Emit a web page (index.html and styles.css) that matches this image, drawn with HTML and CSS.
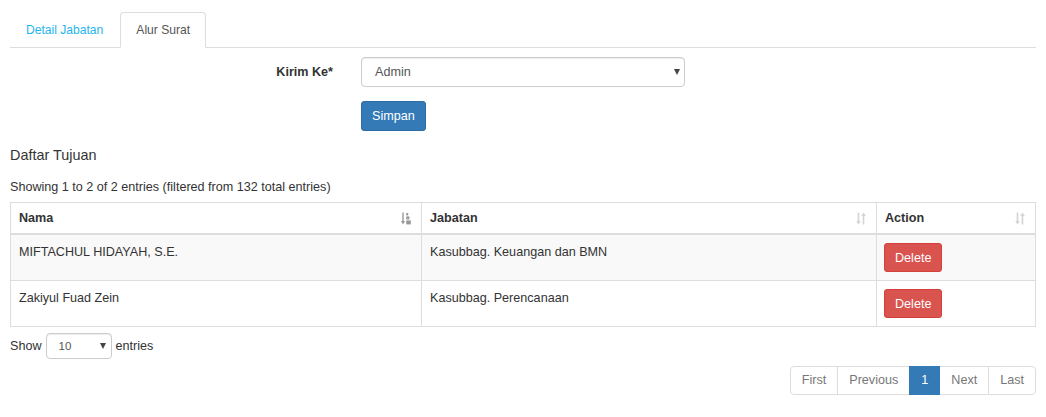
FILE: index.html
```html
<!DOCTYPE html>
<html>
<head>
<meta charset="utf-8">
<link rel="stylesheet" href="styles.css">
</head>
<body>
<div class="page">
  <ul class="tabs">
    <li class="tab"><a href="#">Detail Jabatan</a></li>
    <li class="tab active"><a href="#">Alur Surat</a></li>
  </ul>

  <form class="form">
    <div class="form-row">
      <label class="form-label">Kirim Ke*</label>
      <div class="select-wrap">
        <select class="select"><option>Admin</option></select>
        <span class="caret"></span>
      </div>
    </div>
    <div class="form-row">
      <span class="form-label"></span>
      <div><button type="button" class="btn btn-primary">Simpan</button></div>
    </div>
  </form>

  <h4 class="section-title">Daftar Tujuan</h4>
  <div class="info">Showing 1 to 2 of 2 entries (filtered from 132 total entries)</div>

  <table class="table">
    <thead>
      <tr>
        <th class="col-nama">Nama
          <svg class="sort sorted" width="10" height="13" viewBox="0 0 10 13"><path d="M2 0.5v10" stroke="currentColor" stroke-width="1.4"/><path d="M0 9h4l-2 3.5z" fill="currentColor"/><rect x="5.2" y="1" width="2" height="2.4" fill="currentColor"/><rect x="5.2" y="4.4" width="3.2" height="3" fill="currentColor"/><rect x="5.2" y="8.4" width="4.6" height="4" fill="currentColor"/></svg>
        </th>
        <th class="col-jab">Jabatan
          <svg class="sort" width="10" height="13" viewBox="0 0 10 13"><path d="M2.5 0.5v10" stroke="currentColor" stroke-width="1.6"/><path d="M0.2 9h4.6l-2.3 3.6z" fill="currentColor"/><path d="M7.5 2.5v10" stroke="currentColor" stroke-width="1.6"/><path d="M5.2 4h4.6l-2.3-3.6z" fill="currentColor"/></svg>
        </th>
        <th class="col-act">Action
          <svg class="sort" width="10" height="13" viewBox="0 0 10 13"><path d="M2.5 0.5v10" stroke="currentColor" stroke-width="1.6"/><path d="M0.2 9h4.6l-2.3 3.6z" fill="currentColor"/><path d="M7.5 2.5v10" stroke="currentColor" stroke-width="1.6"/><path d="M5.2 4h4.6l-2.3-3.6z" fill="currentColor"/></svg>
        </th>
      </tr>
    </thead>
    <tbody>
      <tr class="odd">
        <td>MIFTACHUL HIDAYAH, S.E.</td>
        <td>Kasubbag. Keuangan dan BMN</td>
        <td><button type="button" class="btn btn-danger">Delete</button></td>
      </tr>
      <tr>
        <td>Zakiyul Fuad Zein</td>
        <td>Kasubbag. Perencanaan</td>
        <td><button type="button" class="btn btn-danger">Delete</button></td>
      </tr>
    </tbody>
  </table>

  <div class="length">
    <span>Show</span>
    <div class="select-wrap small">
      <select class="select select-sm"><option>10</option></select>
      <span class="caret"></span>
    </div>
    <span>entries</span>
  </div>

  <div class="pager-row">
    <ul class="pagination">
      <li class="disabled"><a href="#">First</a></li>
      <li class="disabled"><a href="#">Previous</a></li>
      <li class="active"><a href="#">1</a></li>
      <li class="disabled"><a href="#">Next</a></li>
      <li class="disabled"><a href="#">Last</a></li>
    </ul>
  </div>
</div>
</body>
</html>
```

FILE: styles.css
```css
* { box-sizing: border-box; }
html, body { margin: 0; padding: 0; background: #fff; }
body {
  font-family: "Liberation Sans", Arial, Helvetica, sans-serif;
  font-size: 12.6px;
  line-height: 18px;
  color: #333;
}
.page { padding: 12px 10px 10px 10px; }

/* tabs */
.tabs {
  list-style: none;
  margin: 0;
  padding: 0;
  display: flex;
  border-bottom: 1px solid #ddd;
}
.tab { margin-bottom: -1px; margin-right: 2px; }
.tab a {
  display: block;
  padding: 8px 15px;
  font-size: 12.1px;
  line-height: 18px;
  border: 1px solid transparent;
  border-radius: 4px 4px 0 0;
  color: #1fb5ee;
  text-decoration: none;
}
.tab:first-child a { padding-right: 14px; }
.tab.active a {
  color: #555;
  background: #fff;
  border-color: #ddd #ddd transparent #ddd;
}

/* form */
.form { margin-top: 9px; }
.form-row {
  display: grid;
  grid-template-columns: 351px 324px;
  align-items: center;
  margin-bottom: 14px;
}
.form-label {
  text-align: right;
  padding-right: 28px;
  font-weight: bold;
}
.select-wrap { position: relative; }
.select {
  display: block;
  width: 100%;
  height: 30px;
  padding: 4px 13px;
  font: inherit;
  color: #555;
  background: #fff;
  border: 1px solid #ccc;
  border-radius: 4px;
  box-shadow: inset 0 1px 1px rgba(0,0,0,.075);
  appearance: none;
  -webkit-appearance: none;
}
.caret {
  position: absolute;
  right: 5px;
  top: 12px;
  width: 0;
  height: 0;
  border-left: 3px solid transparent;
  border-right: 3px solid transparent;
  border-top: 6px solid #444;
  pointer-events: none;
}

.btn {
  display: inline-block;
  padding: 5px 10px;
  font: inherit;
  line-height: 18px;
  border: 1px solid transparent;
  border-radius: 3px;
  color: #fff;
  cursor: pointer;
}
.btn-primary { background: #337ab7; border-color: #2e6da4; }
.btn-danger { background: #d9534f; border-color: #d43f3a; padding: 5px 10px 4px 10px; margin-left: -1px; }

.section-title {
  margin: 0;
  margin-top: 1px;
  font-size: 14.4px;
  font-weight: normal;
  line-height: 20px;
}
.info { margin-top: 13px; margin-bottom: 6px; }

/* table */
.table {
  width: 100%;
  border-collapse: collapse;
  border: 1px solid #ddd;
}
.table th, .table td {
  border: 1px solid #ddd;
  text-align: left;
  vertical-align: top;
}
.table th {
  position: relative;
  padding: 6px 8px 6px;
  font-weight: bold;
  border-bottom: 2px solid #ddd;
}
.table td { padding: 8px 8px 8px; }
.col-nama { width: 411px; }
.col-jab { width: 455px; }
.table tr.odd td { background: #f9f9f9; }
.sort {
  position: absolute;
  right: 10px;
  top: 9px;
  color: #d4d4d4;
}
.sort.sorted { color: #999; }

/* length */
.length {
  display: flex;
  align-items: center;
  gap: 4px;
  margin-top: 6px;
}
.select-wrap.small { width: 66px; }
.select-sm {
  height: 26px;
  font-size: 11.5px;
  padding: 2px 12px;
}
.select-wrap.small .caret { right: 6px; top: 10px; }

/* pagination */
.pager-row {
  display: flex;
  justify-content: flex-end;
  margin-top: 7px;
}
.pagination {
  list-style: none;
  margin: 0;
  padding: 0;
  display: flex;
}
.pagination li a {
  display: block;
  padding: 5px 11px;
  line-height: 17px;
  border: 1px solid #ddd;
  margin-left: -1px;
  color: #777;
  text-decoration: none;
  background: #fff;
}
.pagination li:first-child a { border-radius: 4px 0 0 4px; margin-left: 0; }
.pagination li:last-child a { border-radius: 0 4px 4px 0; }
.pagination li.active a {
  background: #337ab7;
  border-color: #337ab7;
  color: #fff;
  position: relative;
}
```
